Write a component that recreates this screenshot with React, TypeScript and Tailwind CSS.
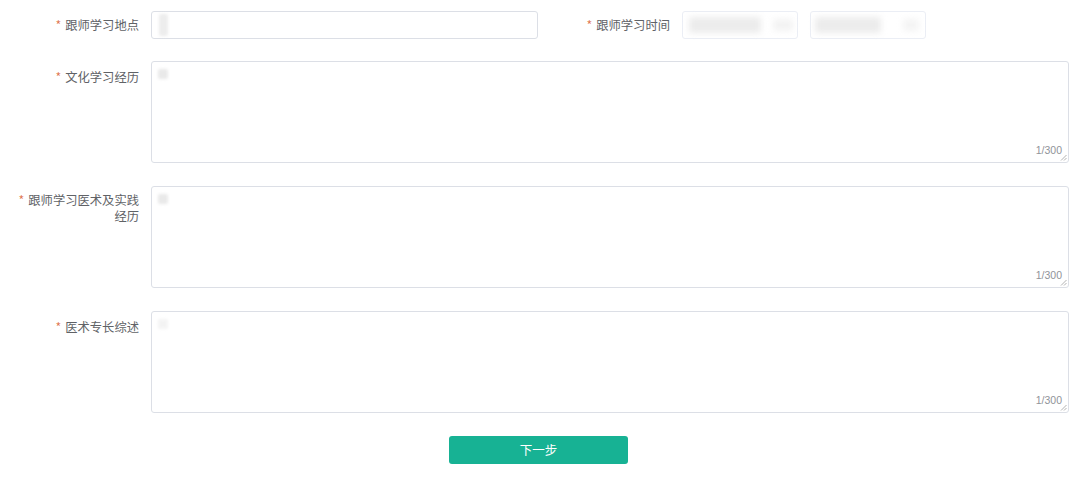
import React from "react";

const font = {
  fontFamily: '"Noto Sans CJK SC", "Noto Sans", "Liberation Sans", sans-serif',
};

function Label({ children, className = "" }: { children: React.ReactNode; className?: string }) {
  return (
    <div className={"shrink-0 pr-3 text-right text-[12.3px] text-[#606266] " + className}>
      <span className="mr-[4px] text-[#e0774f]">*</span>
      {children}
    </div>
  );
}

// Blurred stand-in for the masked values in the screenshot
function Smudge({ className = "" }: { className?: string }) {
  return <div className={"rounded-[2px] bg-[#e9e9e9] blur-[1.5px] " + className} />;
}

function TextArea({ faint = false }: { faint?: boolean }) {
  return (
    <div className="relative h-[102px] w-[918px] rounded-[3px] border border-[#dcdfe6] bg-white">
      <Smudge className={"absolute left-[6px] top-[7px] h-[10px] w-[10px] " + (faint ? "opacity-50" : "")} />
      <span className="absolute bottom-[3px] right-[6px] font-['Liberation_Sans',sans-serif] text-[10.5px] text-[#909399]">
        1/300
      </span>
      <svg className="absolute bottom-[1px] right-[1px]" width="7" height="7" viewBox="0 0 7 7">
        <path d="M1 6.5 L6.5 1 M4 6.5 L6.5 4" stroke="#a0a0a0" strokeWidth="0.8" />
      </svg>
    </div>
  );
}

export default function App() {
  return (
    <div className="h-[477px] w-[1080px] bg-white pt-[11px]" style={font}>
      {/* Place + time */}
      <div className="flex items-center">
        <Label className="w-[151px] leading-[28px]">跟师学习地点</Label>
        <div className="relative h-[28px] w-[387px] rounded-[3px] border border-[#dcdfe6]">
          <Smudge className="absolute left-[7px] top-[2px] h-[22px] w-[9px] bg-[#ededed]" />
        </div>
        <Label className="w-[144px] leading-[28px]">跟师学习时间</Label>
        <div className="flex gap-[12px]">
          <div className="relative h-[28px] w-[116px] rounded-[3px] border border-[#ebeef5]">
            <Smudge className="absolute left-[6px] top-[5px] h-[16px] w-[72px] bg-[#ececec] blur-[3px]" />
            <Smudge className="absolute left-[90px] top-[7px] h-[12px] w-[20px] bg-[#f3f3f3] blur-[3px]" />
          </div>
          <div className="relative h-[28px] w-[116px] rounded-[3px] border border-[#ebeef5]">
            <Smudge className="absolute left-[4px] top-[5px] h-[16px] w-[66px] bg-[#ececec] blur-[3px]" />
            <Smudge className="absolute left-[92px] top-[7px] h-[12px] w-[16px] bg-[#f4f4f4] blur-[3px]" />
          </div>
        </div>
      </div>

      <div className="mt-[22px] flex flex-col gap-[23px]">
        <div className="flex items-start">
          <Label className="w-[151px] pt-[8px] leading-[16px]">文化学习经历</Label>
          <TextArea />
        </div>
        <div className="flex items-start">
          <Label className="w-[151px] pt-[6px] leading-[16px]">
            跟师学习医术及实践
            <br />
            经历
          </Label>
          <TextArea />
        </div>
        <div className="flex items-start">
          <Label className="w-[151px] pt-[8px] leading-[16px]">医术专长综述</Label>
          <TextArea faint />
        </div>
      </div>

      <div className="mt-[23px] pl-[449px]">
        <button className="h-[28px] w-[179px] rounded-[3px] bg-[#17b294] text-[12.5px] text-white">
          下一步
        </button>
      </div>
    </div>
  );
}
